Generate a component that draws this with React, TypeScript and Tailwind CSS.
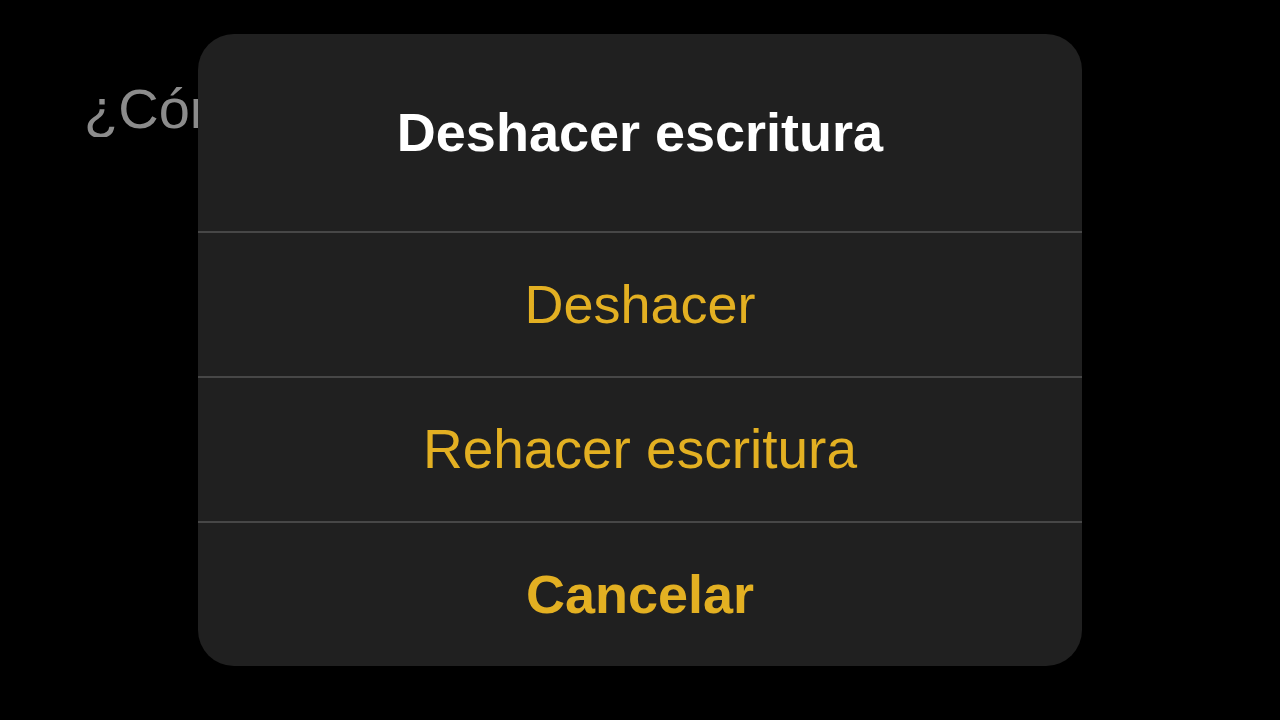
export default function App() {
  const actions = [
    { label: "Deshacer", bold: false, size: "text-[54px]" },
    { label: "Rehacer escritura", bold: false, size: "text-[55px]" },
    { label: "Cancelar", bold: true, size: "text-[54px]" },
  ];

  return (
    <div
      className="relative w-[1280px] h-[720px] overflow-hidden bg-black"
      style={{ fontFamily: '"Liberation Sans", Arial, sans-serif' }}
    >
      {/* note text behind the sheet, cut off where the sheet starts */}
      <div className="ml-[84px] mt-[81px] w-[114px] overflow-hidden whitespace-nowrap text-[56px] leading-[56px] text-[#8c8c8c]">
        ¿Cómo
      </div>

      {/* undo alert */}
      <div className="absolute left-[198px] top-[34px] flex h-[632px] w-[884px] flex-col overflow-hidden rounded-[36px] bg-[#202020]">
        <div className="flex h-[197px] shrink-0 items-center justify-center text-[54px] font-bold text-white">
          Deshacer escritura
        </div>
        {actions.map((a) => (
          <div
            key={a.label}
            className={`flex h-[145px] shrink-0 items-center justify-center border-t-2 border-[#474747] ${a.size} text-[#e3b022] ${
              a.bold ? "font-bold" : "font-normal"
            }`}
          >
            {a.label}
          </div>
        ))}
      </div>
    </div>
  );
}
